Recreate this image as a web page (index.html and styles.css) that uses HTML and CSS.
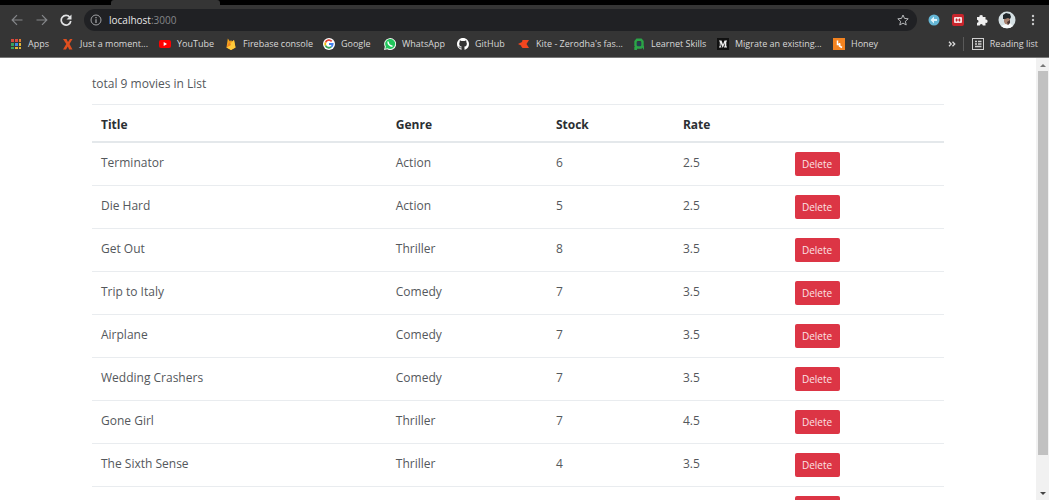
FILE: index.html
```html
<!DOCTYPE html>
<html lang="en">
<head>
<meta charset="utf-8">
<title>Movies</title>
<link rel="stylesheet" href="styles.css">
</head>
<body>
<header class="browser">
  <div class="tabs"><div class="tab"></div></div>
  <div class="toolbar">
    <button class="nav" aria-label="Back"><svg width="12" height="12" viewBox="0 0 12 12" fill="none" stroke="#85878a" stroke-width="1.2"><path d="M11.500 6H1.500M6 1.200L1.200 6 6 10.800"/></svg></button>
    <button class="nav" aria-label="Forward"><svg width="12" height="12" viewBox="0 0 12 12" fill="none" stroke="#85878a" stroke-width="1.2"><path d="M.5 6h10M6 1.200L10.800 6 6 10.800"/></svg></button>
    <button class="nav" aria-label="Reload"><svg width="12" height="12" viewBox="0 0 12 12" fill="none" stroke="#e2e3e4" stroke-width="1.700"><path d="M9.800 3.200A4.800 4.800 0 1 0 10.800 7"/><path d="M11.500.5V5.500H6.500z" fill="#e2e3e4" stroke="none"/></svg></button>
    <div class="address">
      <svg width="12" height="12" viewBox="0 0 12 12" fill="none" stroke="#a0a2a5"><circle cx="6" cy="6" r="5"/><path d="M6 5.200V9M6 3v1.200" stroke-width="1.300"/></svg>
      <span class="url"><span class="host">localhost</span>:3000</span>
      <svg width="12" height="12" viewBox="0 0 12 12" fill="none" stroke="#b6b8ba"><path d="M6 1l1.500 3.400 3.700.4-2.800 2.500.8 3.700L6 9.100 2.800 11l.8-3.700L.8 4.800l3.700-.4z"/></svg>
    </div>
    <div class="extensions">
      <svg width="12" height="12" viewBox="0 0 12 12"><circle cx="6" cy="6" r="5.500" fill="#65b7d6"/><path d="M2.500 6L6 2.500V5h3v2H6v2.500z" fill="#dff5fc"/></svg>
      <svg width="12" height="12" viewBox="0 0 12 12"><rect width="12" height="12" rx="2" fill="#c9252c"/><rect x="2" y="3" width="8" height="6" rx="1" fill="#f6dfe0"/><path d="M3.500 6h5M4.500 4.500v3M7.500 4.500v3" stroke="#c9252c"/></svg>
      <svg width="12" height="12" viewBox="0 0 12 12" fill="#f0f0f0"><path d="M1 3h2.500a1.700 1.700 0 1 1 3.300 0H9.500v2.500a1.700 1.700 0 1 1 0 3.300V11.500H6.800a1.500 1.500 0 0 0-3 0H1V8.700a1.500 1.500 0 0 0 0-3z"/></svg>
      <svg class="avatar" width="18" height="18" viewBox="0 0 18 18"><circle cx="9" cy="9" r="8.500" fill="#d5e0e3"/><path d="M6 7h6v4l-2 3H8l-2-3z" fill="#a7816f"/><path d="M5 8V4l3-2 4 1 1 3-1 2-2-1-3 1z" fill="#20272b"/><path d="M3 15l5-2 2 1 2-2 3 3-3 2H6z" fill="#f7fafb"/><path d="M9 11l3-2v3l-2 2z" fill="#4b3735"/></svg>
      <svg width="4" height="12" viewBox="0 0 4 12" fill="#c8c9ca"><circle cx="2" cy="2" r="1.200"/><circle cx="2" cy="6" r="1.200"/><circle cx="2" cy="10" r="1.200"/></svg>
    </div>
  </div>
  <nav class="bookmarks">
    <div class="links">
      <a href="#"><svg width="12" height="12" viewBox="0 0 12 12"><path fill="#d8493c" d="M1 1h3v3H1zM5 1h3v3H5z"/><path fill="#e07d32" d="M9 1h2v3H9z"/><path fill="#39a15b" d="M1 5h3v3H1zM1 9h3v2H1z"/><path fill="#3f8be0" d="M5 5h3v3H5z"/><path fill="#e2b739" d="M9 5h2v3H9zM5 9h3v2H5zM9 9h2v2H9z"/></svg>Apps</a>
      <a href="#"><svg width="12" height="12" viewBox="0 0 12 12"><path fill="#df4f20" d="M1 1h3.500L6 4l2-3h2.500L7.500 6l3 5.500H7.200L5.800 8.500 4 11.500H1L4.300 6z"/></svg>Just a moment...</a>
      <a href="#"><svg width="12" height="12" viewBox="0 0 12 12"><rect y="2" width="12" height="8" rx="2" fill="#f00"/><path fill="#fff" d="M4.700 4v4L8 6z"/></svg>YouTube</a>
      <a href="#"><svg width="12" height="12" viewBox="0 0 12 12"><path fill="#f6a51d" d="M1.500 9.500L2.800.5 5 3.500 6 2l1 1.500L9 2l1.500 7.500L6 12z"/><path fill="#ffca3a" d="M1.500 9.500L7 4l2-2 1.500 7.500L6 12z"/><path fill="#ef8120" d="M1.500 9.500L4.500 4 6 7z"/></svg>Firebase console</a>
      <a href="#"><svg width="12" height="12" viewBox="0 0 12 12" fill="none" stroke-width="1.800"><circle cx="6" cy="6" r="6" fill="#fff"/><path stroke="#e54335" d="M2.500 4.500A3.700 3.700 0 0 1 8.700 3.400"/><path stroke="#f6b704" d="M2.500 4.500a3.700 3.700 0 0 0 0 3"/><path stroke="#34a353" d="M2.500 7.500a3.700 3.700 0 0 0 5.700 1.400"/><path stroke="#4280ef" d="M6 6h3.700a3.700 3.700 0 0 1-1.500 2.900"/></svg>Google</a>
      <a href="#"><svg width="12" height="12" viewBox="0 0 12 12"><path fill="#eef8f0" d="M0 12l.8-3.200A6 6 0 1 1 3.200 11.300z"/><path fill="#20c45a" d="M1.300 10.700l.6-2.200A5 5 0 1 1 3.600 10.200z"/><path fill="none" stroke="#fff" stroke-width="1.500" d="M4 3.500c0 2.500 2 4.500 4.500 4.700"/></svg>WhatsApp</a>
      <a href="#"><svg width="12" height="12" viewBox="0 0 16 16" fill="#fff"><path d="M8 0C3.580 0 0 3.580 0 8c0 3.540 2.290 6.530 5.470 7.590.4.070.55-.17.55-.38 0-.19-.01-.82-.01-1.490-2.010.37-2.530-.49-2.690-.94-.09-.23-.48-.94-.82-1.130-.28-.15-.68-.52-.01-.53.63-.01 1.080.58 1.230.82.72 1.210 1.870.87 2.330.66.07-.52.28-.87.51-1.070-1.780-.2-3.640-.89-3.640-3.950 0-.87.31-1.590.82-2.150-.08-.2-.36-1.020.08-2.120 0 0 .67-.21 2.200.82a7.600 7.600 0 0 1 4 0c1.530-1.040 2.200-.82 2.200-.82.44 1.100.16 1.920.08 2.120.51.56.82 1.270.82 2.150 0 3.070-1.870 3.750-3.650 3.950.29.25.54.73.54 1.480 0 1.070-.01 1.930-.01 2.200 0 .21.15.46.55.38A8 8 0 0 0 16 8c0-4.420-3.580-8-8-8z"/></svg>GitHub</a>
      <a href="#"><svg width="12" height="12" viewBox="0 0 12 12"><path fill="#f2461f" d="M4.500 2H11L8.500 6 11 10H4.500L3 8zM0 6l4-2v4z"/></svg>Kite - Zerodha's fas...</a>
      <a href="#"><svg width="12" height="12" viewBox="0 0 12 12"><path fill="none" stroke="#2ba548" stroke-width="2.400" d="M2.500 3.500L4 1.800h4l1.500 1.700v4L8 9.500H4L2.500 7.500z"/><path fill="#2ba548" d="M1.300 9H4v3H1.300zM8 8h3v4z"/><path fill="#243e51" d="M4 4h4v4H4z"/></svg>Learnet Skills</a>
      <a href="#"><svg width="12" height="12" viewBox="0 0 12 12"><path fill="#111" d="M0 0h12v12H0z"/><path fill="#eee" d="M2 2.500h2.500L6 6.500l1.500-4H10v.8l-.7.500v4.400l.7.500v.8H7v-.8l.7-.5V5L6 9.500h-.5L3.600 5v3l.8 1v.5H2V9l.8-1V3.800L2 3z"/></svg>Migrate an existing...</a>
      <a href="#"><svg width="12" height="12" viewBox="0 0 12 12"><path fill="#f38320" d="M0 0h12v12H0z"/><path fill="none" stroke="#fff" stroke-width="1.500" d="M4.500 2.500v4h3M6.500 5v3l2.500 1.500"/></svg>Honey</a>
    </div>
    <div class="reading">
      <button class="more" aria-label="More bookmarks"><svg width="8" height="6" viewBox="0 0 8 6" fill="none" stroke="#ddd" stroke-width="1.300"><path d="M1 .8L3.200 3 1 5.200M4.500.8L6.700 3 4.500 5.200"/></svg></button>
      <a href="#"><svg width="12" height="12" viewBox="0 0 12 12" fill="none" stroke="#d0d0d0"><rect x=".5" y=".5" width="11" height="11"/><path d="M3 3.500h2M3 6h2M6 3.500h3.500M6 6h3.500M3 8.500h6.500" stroke-width="1.300"/></svg>Reading list</a>
    </div>
  </nav>
</header>
<div class="viewport">
  <main class="page">
    <p class="summary">total 9 movies in List</p>
    <table class="movies">
      <colgroup><col class="c-title"><col class="c-genre"><col class="c-stock"><col class="c-rate"><col></colgroup>
      <thead><tr><th>Title</th><th>Genre</th><th>Stock</th><th>Rate</th><th></th></tr></thead>
      <tbody>
        <tr><td>Terminator</td><td>Action</td><td>6</td><td>2.5</td><td><button class="delete">Delete</button></td></tr>
        <tr><td>Die Hard</td><td>Action</td><td>5</td><td>2.5</td><td><button class="delete">Delete</button></td></tr>
        <tr><td>Get Out</td><td>Thriller</td><td>8</td><td>3.5</td><td><button class="delete">Delete</button></td></tr>
        <tr><td>Trip to Italy</td><td>Comedy</td><td>7</td><td>3.5</td><td><button class="delete">Delete</button></td></tr>
        <tr><td>Airplane</td><td>Comedy</td><td>7</td><td>3.5</td><td><button class="delete">Delete</button></td></tr>
        <tr><td>Wedding Crashers</td><td>Comedy</td><td>7</td><td>3.5</td><td><button class="delete">Delete</button></td></tr>
        <tr><td>Gone Girl</td><td>Thriller</td><td>7</td><td>4.5</td><td><button class="delete">Delete</button></td></tr>
        <tr><td>The Sixth Sense</td><td>Thriller</td><td>4</td><td>3.5</td><td><button class="delete">Delete</button></td></tr>
        <tr><td></td><td></td><td></td><td></td><td><button class="delete" aria-label="Delete"></button></td></tr>
      </tbody>
    </table>
  </main>
  <div class="scrollbar">
    <svg width="6" height="4" viewBox="0 0 6 4" fill="#777"><path d="M0 4l3-3 3 3z"/></svg>
    <div class="track"><div class="thumb"></div></div>
    <svg width="6" height="4" viewBox="0 0 6 4" fill="#444"><path d="M0 0l3 3 3-3z"/></svg>
  </div>
</div>
</body>
</html>
```
FILE: styles.css
```css
* { box-sizing: border-box; }
body {
  margin: 0;
  height: 100vh;
  display: flex;
  flex-direction: column;
  overflow: hidden;
  background: #fff;
  color: #54585c;
  font: 12px/18px "Open Sans", "Noto Sans", sans-serif;
}
svg { display: block; flex: none; }
a { color: inherit; text-decoration: none; }
button { font: inherit; border: 0; padding: 0; background: none; }

.browser {
  flex: none;
  background: #353535;
  color: #d8d8d8;
  border-bottom: 1px solid #777;
}
.tabs { height: 5px; padding-left: 111px; background: #000; }
.tab { width: 109px; height: 5px; background: #353535; border-radius: 3px 3px 0 0; }
.toolbar {
  display: flex;
  align-items: center;
  height: 26px;
  padding: 3px 14px 0 11px;
}
.nav { width: 12px; margin-right: 13px; }
.nav:nth-child(2) { margin-right: 12px; }
.nav:nth-child(3) { margin-right: 12px; }
.address {
  flex: 1;
  display: flex;
  align-items: center;
  gap: 7px;
  height: 22px;
  padding: 0 8px 0 6px;
  border-radius: 11px;
  background: #202124;
  font-size: 10px;
}
.url { flex: 1; color: #85878a; }
.host { color: #e8e8e8; }
.extensions {
  display: flex;
  align-items: center;
  gap: 12px;
  padding-left: 11px;
}
.extensions .avatar { margin-left: -2px; }
.extensions svg:last-child { margin-left: 3px; }

.bookmarks {
  display: flex;
  justify-content: space-between;
  align-items: center;
  height: 26px;
  padding: 0 11px 0 10px;
  font-size: 9px;
  white-space: nowrap;
}
.links {
  display: grid;
  grid-template-columns: 52px 97px 66px 98px 61px 73px 61px 115px 84px 116px 50px;
}
.bookmarks a { display: flex; align-items: center; gap: 6px; }
.reading { display: flex; align-items: center; }
.more { padding-right: 7px; margin-right: 8px; height: 14px; border-right: 1px solid #5a5a5a; }

.viewport { flex: 1; min-height: 0; display: flex; }
.page {
  flex: 1;
  overflow: hidden;
  padding: 17px 92px 0;
}
.summary { margin: 0 0 11px; }
.movies {
  width: 100%;
  table-layout: fixed;
  border-collapse: separate;
  border-spacing: 0;
  border-bottom: 1px solid #e9ecef;
  line-height: 22px;
}
.c-title { width: 34.6%; }
.c-genre { width: 18.8%; }
.c-stock { width: 14.9%; }
.c-rate { width: 13.1%; }
.movies th, .movies td {
  padding: 9px;
  text-align: left;
  vertical-align: top;
  border-top: 1px solid #e9ecef;
}
.movies th {
  height: 39px;
  padding-bottom: 5px;
  color: #2b2f33;
  font-weight: 700;
  border-bottom: 2px solid #e4e8eb;
}
.movies tbody tr:first-child td { border-top: 0; }
.delete {
  display: block;
  min-width: 45px;
  height: 24px;
  padding: 0 6px;
  border-radius: 2px;
  background: #dc3545;
  color: #fbe3e5;
  font-size: 10px;
}
.scrollbar {
  flex: none;
  width: 13px;
  display: flex;
  flex-direction: column;
  align-items: center;
  gap: 4px;
  padding: 5px 0 4px;
  background: #f1f1f1;
}
.track { flex: 1; width: 10px; }
.thumb { height: 92%; background: #c1c1c1; }
```
